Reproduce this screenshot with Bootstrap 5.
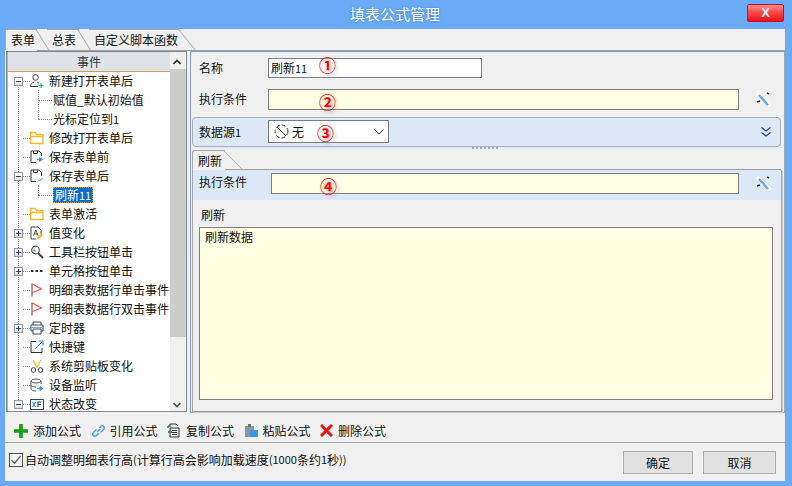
<!DOCTYPE html>
<html lang="zh"><head><meta charset="utf-8"><title>填表公式管理</title>
<link href="https://cdn.jsdelivr.net/npm/bootstrap@5.3.0/dist/css/bootstrap.min.css" rel="stylesheet">
<style>
html,body{margin:0;width:792px;height:486px;overflow:hidden;background:#6aaaf7}
body{font-family:"Noto Sans CJK SC","Liberation Sans",sans-serif;font-size:12px;line-height:1;color:#111}
svg{display:block;flex:none}
.asc{font-size:11px}
.win{width:792px;height:486px;background:#6aaaf7}
.tbar{height:29px;position:relative}
.ttl{font-size:15px;color:#fff;text-align:center;padding-top:6px;width:790px;text-shadow:0 0 2px #3d74b8}
.clo{position:absolute;left:747px;top:4px;width:37px;height:18px;border:1px solid #d00c22;border-radius:2px;background:linear-gradient(#ff8d8d,#fb4a4a 45%,#ec0f1e);color:#fff;font:bold 13px/16px "Liberation Sans",sans-serif;text-align:center}
.body{margin-left:5px;width:780px;height:452px;background:#f0f0f0}
.tabs{height:22px;border-bottom:1px solid #a0a0a0;position:relative}
.tb{position:absolute;top:0;height:22px;padding-top:4px;padding-left:5px;border-top:1px solid #a8a8a8}
.tb::after{content:"";position:absolute;top:0;bottom:0;width:16px;right:-6px;border-right:1px solid #a8a8a8;transform:skewX(32deg)}
.t1{left:0;width:32px;background:#f0f0f0;z-index:3;border-left:1px solid #a8a8a8;border-bottom:1px solid #f0f0f0}
.t2{left:42px;width:32px;z-index:2}
.t3{left:84px;width:90px;z-index:1}
.t3::after{right:-9px;transform:skewX(39deg)}
.main{height:362px}
.lp{width:181px;height:361px;margin-left:1px;border:1px solid #828790;background:#fff;position:relative;box-shadow:inset 1px 1px 0 #b0b4ba}
.lhead{height:20px;margin:0 16px 0 1px;background:#dfe3e8;border-bottom:1px solid #c99d5c;text-align:center;line-height:19px;color:#2b3a3a}
.scr{position:absolute;right:0;top:0;bottom:0;width:16px;background:#f0f0f0}
.th{position:absolute;left:0;right:0;top:17px;height:268px;background:#cdcdcd}
.sa1,.sa2{position:absolute;left:3px}
.sa1{top:7px}.sa2{bottom:3px}
.tree{position:relative;padding-left:7px;height:339px}
.vl1{position:absolute;left:11px;top:12px;height:320px;border-left:1px dotted #888}
.vl2{position:absolute;left:31px;top:18px;height:29px;border-left:1px dotted #888}
.vl3{position:absolute;left:31px;top:113px;height:10px;border-left:1px dotted #888}
.rw{height:19px;display:flex;align-items:center;white-space:nowrap;position:relative}
.ex{width:9px;height:9px;border:1px solid #9a9a9a;background:linear-gradient(#fff,#dcdcdc);flex:none;position:relative}
.ex::before{content:"";position:absolute;left:1px;right:1px;top:3px;height:1px;background:#2b3f78}
.pl::after{content:"";position:absolute;top:1px;bottom:1px;left:3px;width:1px;background:#2b3f78}
.nx{width:9px;flex:none}
.cn{width:7px;border-top:1px dotted #888;flex:none}
.rw svg{margin-right:5px}
.rw.ch{padding-left:24px}
.ch .cn{width:14px;margin-right:1px}
.sel{background:#0a6dcc;color:#fff;outline:1px dotted #e6a040;outline-offset:-1px;padding:2px;height:16px;line-height:12px}
.rp{width:595px;height:362px;margin-left:3px;border:1px solid #88a0bd;border-right-color:#9aa;padding:0 1px}
.frow{height:29px;display:flex;align-items:center;position:relative}
.r1{height:33px}
.lb{width:76px;padding-left:7px;flex:none}
.fld{border:1px solid #808080;background:#fff;height:20px;line-height:18px;padding-left:2px;flex:none}
.yl{background:#ffffe3}
.cir{position:absolute;color:#f00;font-size:17px;line-height:17px;font-weight:700;text-shadow:2px 2px 3px #aaa}
.dsb{height:30px;margin:3px 2px 0 0;background:#dde8f7;border:1px solid #adadad;border-radius:4px;display:flex;align-items:center;position:relative}
.sel2{width:121px;height:23px;border:1px solid #7a7a7a;background:#fff;display:flex;align-items:center;padding-left:4px;position:relative}
.nosg{margin-right:2px}
.spl{height:3px;background:linear-gradient(#dde8f7,#edf0f5);position:relative;margin-right:2px}
.spl::after{content:"";position:absolute;left:280px;top:0;width:26px;height:2px;background:repeating-linear-gradient(90deg,#aaa 0 2px,transparent 2px 4px)}
.stab{height:20px;position:relative;border-bottom:1px solid #a0a0a0;margin-right:2px}
.st1{position:absolute;left:0;top:0;width:33px;height:20px;border-top:1px solid #a8a8a8;border-left:1px solid #a8a8a8;border-bottom:1px solid #f0f0f0;padding:4px 0 0 5px;border-radius:3px 0 0 0;background:#f0f0f0}
.st1::after{content:"";position:absolute;top:0;bottom:-1px;width:16px;right:-9px;border-right:1px solid #a8a8a8;transform:skewX(45deg)}
.pan{height:242px;border:1px solid #a8a8a8;border-top:0;border-bottom-color:#9a9a9a;width:590px;box-shadow:1px 1px 0 #c8c8c8}
.crow{height:30px;background:#dde8f7;display:flex;align-items:center;position:relative;padding-bottom:2px}
.lb3{width:78px;padding:0 0 3px 6px;flex:none}
.lb2{padding:9px 0 0 8px;height:27px}
.ta{margin-left:6px;width:574px;height:173px;border:1px solid #808080;background:#ffffe3;padding:3px 5px}
.tool{height:31px;padding:6px 0 0 9px;border-bottom:1px solid #a8a8a8;display:flex;align-items:center}
.tl{display:flex;align-items:center;width:76.500px;gap:5px;flex:none;white-space:nowrap}
.foot{height:38px;display:flex;align-items:center}
.chk{display:flex;align-items:center;margin:0 0 5px 4px}
.cb{width:14px;height:14px;border:1px solid #555;background:#f6f6f6;margin-right:2px;flex:none}
.btnx{height:23px;background:#e1e1e1;border:1px solid #adadad;text-align:center;line-height:21px;flex:none}
.b1{width:70px}
.b2{width:73px;margin:0 9px 0 10px}
</style></head><body>
<div class="win d-flex flex-column">
 <div class="tbar"><div class="ttl">填表公式管理</div><div class="clo">X</div></div>
 <div class="body d-flex flex-column">
  <div class="tabs"><div class="tb t1">表单</div><div class="tb t2">总表</div><div class="tb t3">自定义脚本函数</div></div>
  <div class="main d-flex">
   <div class="lp">
    <div class="lhead">事件</div>
    <div class="scr"><div class="th"></div>
     <svg class="sa1" width="8" height="6" viewBox="0 0 8 6"><path d="M.5 5 4 1.500 7.500 5" fill="none" stroke="#333" stroke-width="1.700"/></svg>
     <svg class="sa2" width="8" height="6" viewBox="0 0 8 6"><path d="M.5 1 4 4.500 7.500 1" fill="none" stroke="#555" stroke-width="1.700"/></svg>
    </div>
    <div class="tree">
     <div class="vl1"></div><div class="vl2"></div><div class="vl3"></div>
     <div class="rw"><span class="ex"></span><span class="cn"></span><svg width="14" height="14" viewBox="0 0 14 14"><circle cx="5.500" cy="3.500" r="2.800" fill="none" stroke="#444"/><path d="M.5 12.500c0-3 2-4 3.500-4.500M7 8c.8.300 1.500.7 2 1.300M.5 12.500H8" fill="none" stroke="#444"/><path d="M8.500 11.500h5M11 9v5" stroke="#19b36b" stroke-width="1.200"/></svg>新建打开表单后</div>
     <div class="rw ch"><span class="cn"></span>赋值_默认初始值</div>
     <div class="rw ch"><span class="cn"></span>光标定位到<span class="asc">1</span></div>
     <div class="rw"><span class="nx"></span><span class="cn"></span><svg width="14" height="14" viewBox="0 0 14 14"><path d="M.7 12.500V1.500h4.500l1.300 2H13v9z M.7 5.500H13" fill="none" stroke="#fbb71e" stroke-width="1.300"/></svg>修改打开表单后</div>
     <div class="rw"><span class="nx"></span><span class="cn"></span><svg width="14" height="14" viewBox="0 0 14 14"><path d="M6 12.500H1V1h8l2.500 2.500V6M3.500 1v2.500h4V1" fill="none" stroke="#333"/><path d="M7 9.500h4M9.500 7.500l3 2-3 2z" fill="#3a96e6" stroke="#3a96e6"/></svg>保存表单前</div>
     <div class="rw"><span class="ex"></span><span class="cn"></span><svg width="14" height="14" viewBox="0 0 14 14"><path d="M6 12.500H1V1h8l2.500 2.500V7M3.500 1v2.500h4V1" fill="none" stroke="#333"/><path d="M8 10.500l1.500 1.500 3-3" fill="none" stroke="#2a8fe0"/></svg>保存表单后</div>
     <div class="rw ch"><span class="cn"></span><span class="sel">刷新<span class="asc">11</span></span></div>
     <div class="rw"><span class="nx"></span><span class="cn"></span><svg width="14" height="14" viewBox="0 0 14 14"><path d="M.7 12.500V1.500h4.500l1.300 2H13v9z M.7 5.500H13" fill="none" stroke="#fbb71e" stroke-width="1.300"/></svg>表单激活</div>
     <div class="rw"><span class="ex pl"></span><span class="cn"></span><svg width="14" height="14" viewBox="0 0 14 14"><path d="M6 13H1V1h7l3 3v4" fill="none" stroke="#444"/><path d="M3.500 9.500 5.800 4l2.200 5.500M4.500 8h2.500" fill="none" stroke="#444"/><path d="M7 13l1-2.500 3-3 2 1.500-3.500 3.500z" fill="#fbb71e"/></svg>值变化</div>
     <div class="rw"><span class="ex pl"></span><span class="cn"></span><svg width="14" height="14" viewBox="0 0 14 14"><circle cx="5.500" cy="5" r="3.800" fill="none" stroke="#555" stroke-width="1.200"/><path d="M8 8l5 5" stroke="#444" stroke-width="2"/><path d="M3.500 4.500l2 2" stroke="#3a96e6" stroke-width="1.300"/></svg>工具栏按钮单击</div>
     <div class="rw"><span class="ex pl"></span><span class="cn"></span><svg width="14" height="14" viewBox="0 0 14 14"><path d="M1 7h2.500M5.500 7H8M10 7h2.500" stroke="#333" stroke-width="2"/></svg>单元格按钮单击</div>
     <div class="rw"><span class="nx"></span><span class="cn"></span><svg width="14" height="14" viewBox="0 0 14 14"><path d="M2 .5V13.500" stroke="#c2524f" stroke-width="1.300"/><path d="M2.500 1 11.500 6 2.500 9.500" fill="none" stroke="#f04a42" stroke-width="1.100"/></svg>明细表数据行单击事件</div>
     <div class="rw"><span class="nx"></span><span class="cn"></span><svg width="14" height="14" viewBox="0 0 14 14"><path d="M2 .5V13.500" stroke="#c2524f" stroke-width="1.300"/><path d="M2.500 1 11.500 6 2.500 9.500" fill="none" stroke="#f04a42" stroke-width="1.100"/></svg>明细表数据行双击事件</div>
     <div class="rw"><span class="ex pl"></span><span class="cn"></span><svg width="14" height="14" viewBox="0 0 14 14"><path d="M3 4V1h8v3M3 10H1V4h12v6h-2M3 8h8v5H3z" fill="none" stroke="#3a4a5a"/><path d="M1.500 6.500h11" stroke="#6aaaf7"/></svg>定时器</div>
     <div class="rw"><span class="nx"></span><span class="cn"></span><svg width="14" height="14" viewBox="0 0 14 14"><path d="M6 1.500H1v11h11V8" fill="none" stroke="#333"/><path d="M5 9l7.500-7.500M8.500 1h4.500v4.500" fill="none" stroke="#2a8fe0"/></svg>快捷键</div>
     <div class="rw"><span class="nx"></span><span class="cn"></span><svg width="14" height="14" viewBox="0 0 14 14"><path d="M3 1l4 7 4-7" fill="none" stroke="#fbb71e" stroke-width="1.200"/><circle cx="3.500" cy="11" r="2.300" fill="none" stroke="#444"/><circle cx="10.500" cy="11" r="2.300" fill="none" stroke="#444"/></svg>系统剪贴板变化</div>
     <div class="rw"><span class="nx"></span><span class="cn"></span><svg width="14" height="14" viewBox="0 0 14 14"><ellipse cx="6" cy="3" rx="5" ry="2" fill="none" stroke="#555"/><path d="M1 3v8c0 1 2 2 5 2M1 7c0 1 2 2 5 2M11 3v3" fill="none" stroke="#555"/><path d="M7 10.500h4M10 8.500l3 2-3 2z" fill="#3a96e6" stroke="#3a96e6"/></svg>设备监听</div>
     <div class="rw"><span class="ex"></span><span class="cn"></span><svg width="14" height="14" viewBox="0 0 14 14"><path d="M.5 2.500h13v10H.5z" fill="#fff" stroke="#33445a"/><path d="M2.500 5l3 5M5.500 5l-3 5" stroke="#2a8fe0" stroke-width="1.200"/><path d="M11.500 5H8v5M8 7.500h3" fill="none" stroke="#2b4f9a" stroke-width="1.200"/></svg>状态改变</div>
    </div>
   </div>
   <div class="rp">
    <div class="frow r1"><div class="lb">名称</div><div class="fld" style="width:214px">刷新<span class="asc">11</span></div><span class="cir" style="left:127px;top:4px">①</span></div>
    <div class="frow"><div class="lb">执行条件</div><div class="fld yl" style="width:471px;height:21px"></div><svg class="ms-3" width="17" height="17" viewBox="0 0 17 17"><path d="M2 2l13 13" stroke="#fff" stroke-width="4"/><path d="M4 4l9 10" stroke="#6aa5ee" stroke-width="2.400"/><path d="M2 11l3-1M12 2l2 1" stroke="#222" stroke-width="1.500"/></svg><span class="cir" style="left:127px;top:8px">②</span></div>
    <div class="dsb"><div class="lb" style="width:75px;padding-left:6px">数据源<span class="asc">1</span></div><div class="sel2"><svg class="nosg" width="17" height="17" viewBox="0 0 17 17"><circle cx="8.500" cy="8.500" r="6.500" fill="none" stroke="#333" stroke-dasharray="4 2"/><path d="M4 4l9 9" stroke="#333"/></svg>无<svg class="ms-auto me-1" width="10" height="6" viewBox="0 0 10 6"><path d="M.5.500 5 5 9.500.5" fill="none" stroke="#444"/></svg></div><span class="cir" style="left:124px;top:6px">③</span><svg class="ms-auto me-2" width="12" height="12" viewBox="0 0 12 12"><path d="M1.500 1.500 6 5l4.500-3.500M1.500 6.500 6 10l4.500-3.500" fill="none" stroke="#2b4a78" stroke-width="1.300"/></svg></div>
    <div class="spl"></div>
    <div class="stab"><div class="st1">刷新</div></div>
    <div class="pan">
     <div class="crow"><div class="lb3">执行条件</div><div class="fld yl" style="width:468px;height:21px"></div><svg class="ms-3" width="17" height="17" viewBox="0 0 17 17"><path d="M2 2l13 13" stroke="#fff" stroke-width="4"/><path d="M4 4l9 10" stroke="#6aa5ee" stroke-width="2.400"/><path d="M2 11l3-1M12 2l2 1" stroke="#222" stroke-width="1.500"/></svg><span class="cir" style="left:127px;top:7px">④</span></div>
     <div class="lb2">刷新</div>
     <div class="ta">刷新数据</div>
    </div>
   </div>
  </div>
  <div class="tool">
   <div class="tl"><svg width="14" height="14" viewBox="0 0 14 14"><path d="M7 0v14M0 7h14" stroke="#12a012" stroke-width="3.600"/></svg>添加公式</div>
   <div class="tl"><svg width="14" height="15" viewBox="0 0 14 15"><path d="M6 9 9 6M5.500 6.500 2 10a2.200 2.200 0 0 0 3 3l3-3M8.500 5 10 3a2.200 2.200 0 0 1 3 3l-3.500 3.500" fill="none" stroke="#4d9fe8" stroke-width="1.400"/></svg>引用公式</div>
   <div class="tl"><svg width="14" height="15" viewBox="0 0 14 15"><path d="M3 4V1h6l2 2M1 5V3h2M3 5h9v9H3z" fill="none" stroke="#333"/><path d="M5 7.500h5M5 9.500h5M5 11.500h5" stroke="#333"/><path d="M1 9h4" stroke="#1a9a3a" stroke-width="2"/></svg>复制公式</div>
   <div class="tl"><svg width="14" height="15" viewBox="0 0 14 15"><path d="M1 3h9v11H1z" fill="#8d949c"/><path d="M4 1h3v3H4z" fill="#6b7178"/><path d="M6 7h8v7H6z" fill="#3a96e6"/></svg>粘贴公式</div>
   <div class="tl"><svg width="13" height="13" viewBox="0 0 13 13"><path d="M1 1l11 11M12 1 1 12" stroke="#ef0f0f" stroke-width="3"/></svg>删除公式</div>
  </div>
  <div class="foot"><div class="chk"><div class="cb"><svg width="12" height="12" viewBox="0 0 12 12"><path d="M1.500 6 4.500 9.500 10.500 2" fill="none" stroke="#666" stroke-width="1.300"/></svg></div>自动调整明细表行高<span class="asc">(</span>计算行高会影响加载速度<span class="asc">(1000</span>条约<span class="asc">1</span>秒<span class="asc">))</span></div><div class="btnx b1 ms-auto">确定</div><div class="btnx b2">取消</div></div>
 </div>
</div>
</body></html>
